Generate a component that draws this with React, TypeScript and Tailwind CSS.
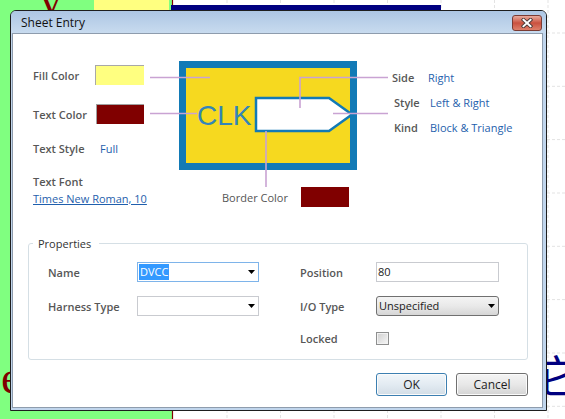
import React from "react";

const LINE = "#c9a3d3";
const BLUE = "#127ab6";

const label = "text-[11px] leading-[15px] font-semibold text-[#575757] whitespace-nowrap";
const value = "text-[11px] leading-[15px] text-[#1f5fad] whitespace-nowrap";

function Background() {
  const vx = [227, 280.5, 334, 387.5, 441, 494.5, 548];
  const hy = [33, 86.3, 139.6, 193, 246.3, 299.6, 353, 406.3];
  return (
    <svg className="absolute inset-0" width="565" height="419" viewBox="0 0 565 419">
      <rect width="565" height="419" fill="#ffffff" />
      {vx.map((x) => (
        <line key={x} x1={x} y1={0} x2={x} y2={419} stroke="#e3e3e3" strokeDasharray="3 2" />
      ))}
      {hy.map((y) => (
        <line key={y} x1={172} y1={y} x2={565} y2={y} stroke="#e3e3e3" strokeDasharray="3 2" />
      ))}
      <rect x="0" y="0" width="172" height="419" fill="#80ff80" />
      <rect x="94" y="0" width="75" height="80" fill="#ffff80" />
      <line x1="172.5" y1="0" x2="172.5" y2="419" stroke="#800000" strokeWidth="1.2" />
      <rect x="171" y="5" width="270" height="6" fill="#000080" />
      {/* only the lower tip of a big schematic "V" shows above the dialog */}
      <svg x="0" y="0" width="172" height="10" overflow="hidden">
        <text x="51" y="15" fontSize="40" fontFamily="Liberation Serif, serif" fill="#800000" textAnchor="middle">
          V
        </text>
      </svg>
      <text x="1" y="393" fontSize="46" fontFamily="Liberation Serif, serif" fill="#800000">
        e
      </text>
      <text x="535" y="393" fontSize="44" fontFamily="Noto Sans CJK SC, sans-serif" fill="#000080">
        它
      </text>
    </svg>
  );
}

function CloseButton() {
  return (
    <div className="mt-[4px] mr-[4px] w-[30px] h-[16px] rounded-[3px] border border-[#7a3b33] bg-linear-to-b from-[#e8ab9d] via-[#c9503f] to-[#de806b] flex items-center justify-center">
      <svg width="12" height="10" viewBox="0 0 12 10">
        <path d="M2.5 1.8 L9.5 8.2 M9.5 1.8 L2.5 8.2" stroke="#4a3a38" strokeWidth="3.8" strokeLinecap="square" />
        <path d="M2.5 1.8 L9.5 8.2 M9.5 1.8 L2.5 8.2" stroke="#ffffff" strokeWidth="2" strokeLinecap="square" />
      </svg>
    </div>
  );
}

function Arrow() {
  return (
    <svg width="7" height="4" viewBox="0 0 7 4" className="mr-[3px] shrink-0">
      <polygon points="0,0 7,0 3.5,4" fill="#000000" />
    </svg>
  );
}

function Combo({ text, focused }: { text?: string; focused?: boolean }) {
  return (
    <div
      className={`w-[122px] h-[20px] flex items-center bg-white border ${
        focused ? "border-[#7eb4ea]" : "border-[#c9cbd0]"
      }`}
    >
      <div className="flex-1 pl-[1px] flex items-center">
        {text && (
          <span className="bg-[#3399ff] text-white text-[11px] leading-[16px] px-[1px]">{text}</span>
        )}
      </div>
      <Arrow />
    </div>
  );
}

function Diagram() {
  return (
    <svg width="238" height="126" viewBox="0 0 238 126">
      <rect x="32.5" y="3.5" width="171" height="102" fill="#f6d91f" stroke={BLUE} strokeWidth="7" />
      <text x="47" y="64" fontFamily="Liberation Sans, Arial, sans-serif" fontSize="28" fill="#3385b8">
        CLK
      </text>
      <polygon points="106,37 179,37 202,53.5 179,70 106,70" fill="#ffffff" stroke={BLUE} strokeWidth="2.5" />
      <line x1="0" y1="16.5" x2="60" y2="16.5" stroke={LINE} strokeWidth="1.6" />
      <line x1="0" y1="52.5" x2="47" y2="52.5" stroke={LINE} strokeWidth="1.6" />
      <polyline points="150,47 150,16.5 238,16.5" fill="none" stroke={LINE} strokeWidth="1.6" />
      <line x1="183" y1="52.5" x2="238" y2="52.5" stroke={LINE} strokeWidth="1.6" />
      <line x1="116" y1="70" x2="116" y2="126" stroke={LINE} strokeWidth="1.6" />
    </svg>
  );
}

function WinButton({ children, primary, width }: { children: React.ReactNode; primary?: boolean; width: string }) {
  return (
    <div
      className={`${width} h-[23px] rounded-[3px] border flex items-center justify-center text-[12px] text-[#1e1e1e] shadow-[inset_0_0_0_1px_#fbfbfb] ${
        primary
          ? "border-[#3c7fb1] bg-linear-to-b from-[#f1f6fa] via-[#e3ebf2] to-[#d2dde6]"
          : "border-[#707070] bg-linear-to-b from-[#f4f4f4] via-[#e8e8e8] to-[#d4d4d4]"
      }`}
    >
      {children}
    </div>
  );
}

export default function App() {
  return (
    <div className="relative w-[565px] h-[419px] overflow-hidden font-['Open_Sans',sans-serif]">
      <Background />

      {/* dialog window */}
      <div className="absolute left-[10px] top-[10px] w-[537px] h-[401px] flex flex-col border border-[#1e1e1e] rounded-t-[6px] bg-[#c0d5ec] overflow-hidden">
        <div className="h-[22px] shrink-0 flex items-start justify-between bg-linear-to-b from-[#adc6e4] to-[#c8dbef]">
          <span className="pl-[10px] pt-[4px] text-[12px] leading-[15px] text-[#111111]">Sheet Entry</span>
          <CloseButton />
        </div>

        <div className="flex-1 flex flex-col pl-[1px] pr-[3px] pb-[2px]">
          <div className="flex-1 border border-[#8e9cad] bg-white flex flex-col">
            {/* preview section */}
            <div className="flex pl-[20px] pt-[27px]">
              <div className="w-[117px] flex flex-col">
                <div className="mt-[4px] h-[20px] flex items-center">
                  <span className={`${label} w-[62px]`}>Fill Color</span>
                  <span className="w-[49px] h-[20px] bg-[#ffff80] border-t border-l border-[#a8a8a8]" />
                </div>
                <div className="mt-[19px] h-[20px] flex items-center">
                  <span className={`${label} w-[63px]`}>Text Color</span>
                  <span className="w-[48px] h-[20px] bg-[#800000] border-t border-l border-[#a0a0a0]" />
                </div>
                <div className="mt-[14px] h-[20px] flex items-center">
                  <span className={`${label} w-[67px]`}>Text Style</span>
                  <span className={value}>Full</span>
                </div>
                <div className="mt-[15px] h-[16px] flex items-center">
                  <span className={label}>Text Font</span>
                </div>
                <div className="mt-[1px] h-[16px] flex items-center">
                  <span className="text-[11px] leading-[15px] text-[#1f5fad] underline whitespace-nowrap">
                    Times New Roman, 10
                  </span>
                </div>
              </div>

              <div className="w-[238px] flex flex-col">
                <Diagram />
                <div className="h-[20px] flex items-center pl-[72px]">
                  <span className="w-[79px] text-[11px] leading-[15px] text-[#555555] whitespace-nowrap">
                    Border Color
                  </span>
                  <span className="w-[48px] h-[20px] bg-[#800000]" />
                </div>
              </div>

              <div className="pl-[4px] pt-[4px] flex flex-col">
                <div className="h-[25px] flex items-center">
                  <span className={`${label} w-[36px]`}>Side</span>
                  <span className={value}>Right</span>
                </div>
                <div className="h-[25px] flex items-center pl-[2px]">
                  <span className={`${label} w-[36px]`}>Style</span>
                  <span className={value}>Left &amp; Right</span>
                </div>
                <div className="h-[25px] flex items-center pl-[2px]">
                  <span className={`${label} w-[36px]`}>Kind</span>
                  <span className={value}>Block &amp; Triangle</span>
                </div>
              </div>
            </div>

            {/* properties group */}
            <div className="relative mt-[36px] ml-[15px] w-[500px] h-[117px] border border-[#d5dfe5] rounded-[3px]">
              <span className="absolute left-[4px] top-[-8px] pl-[5px] pr-[8px] bg-white text-[11px] leading-[15px] text-[#333333]">
                Properties
              </span>
              <div className="flex pl-[19px] pt-[18px]">
                <div className="flex flex-col">
                  <div className="h-[20px] flex items-center">
                    <span className={`${label} w-[89px]`}>Name</span>
                    <Combo text="DVCC" focused />
                  </div>
                  <div className="mt-[14px] h-[20px] flex items-center">
                    <span className={`${label} w-[89px]`}>Harness Type</span>
                    <Combo />
                  </div>
                </div>
                <div className="ml-[41px] flex flex-col">
                  <div className="h-[20px] flex items-center">
                    <span className={`${label} w-[76px]`}>Position</span>
                    <div className="w-[123px] h-[20px] border border-[#c9cbd0] bg-white flex items-center pl-[1px] text-[11px] text-[#1a1a1a]">
                      80
                    </div>
                  </div>
                  <div className="mt-[14px] h-[20px] flex items-center">
                    <span className={`${label} w-[76px]`}>I/O Type</span>
                    <div className="w-[123px] h-[20px] rounded-[3px] border border-[#707070] bg-linear-to-b from-[#f4f4f4] via-[#e9e9e9] to-[#d6d6d6] flex items-center justify-between pl-[2px] text-[11px] text-[#1a1a1a]">
                      <span>Unspecified</span>
                      <Arrow />
                    </div>
                  </div>
                  <div className="mt-[16px] h-[13px] flex items-center">
                    <span className={`${label} w-[76px]`}>Locked</span>
                    <span className="w-[13px] h-[13px] border border-[#8e8f8f] bg-linear-to-br from-[#cfcfcf] to-[#f7f7f7] shadow-[inset_0_0_0_1px_#f2f2f2]" />
                  </div>
                </div>
              </div>
            </div>

            {/* buttons */}
            <div className="mt-[13px] flex justify-end gap-[9px] pr-[14px]">
              <WinButton primary width="w-[71px]">
                OK
              </WinButton>
              <WinButton width="w-[72px]">Cancel</WinButton>
            </div>
          </div>
        </div>
      </div>
    </div>
  );
}
